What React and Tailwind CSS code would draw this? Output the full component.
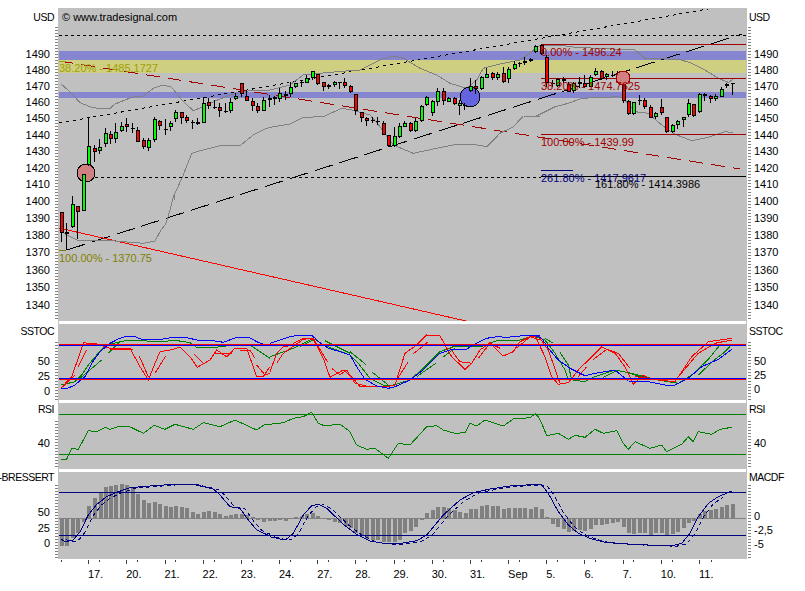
const pts = (ox, oy, a) => {
  const out = [];
  for (let i = 0; i < a.length; i += 2) out.push(`${(ox + a[i] / 3).toFixed(1)},${(oy + a[i + 1] / 3).toFixed(1)}`);
  return out.join(" ");
};

const Line = ({ ox = 0, oy = 0, a, c, w = 1, dash }) => (
  <polyline points={pts(ox, oy, a)} fill="none" stroke={c} strokeWidth={w} strokeDasharray={dash} />
);

// [x, wickTop, wickBottom, bodyTop, bodyBottom, colour] in 3x zoom units
const candleGroups = [
  [0, 0, [
    [184, 636, 726, 636, 699, "r"], [199, 669, 750, 696, 702, "k"], [217, 588, 685, 612, 682, "g"], [232, 618, 718, 618, 636, "r"],
    [250, 522, 634, 522, 634, "g"], [265, 352, 498, 438, 495, "g"], [283, 435, 485, 445, 455, "r"], [298, 418, 462, 442, 452, "g"],
    [316, 385, 440, 400, 433, "g"], [331, 392, 432, 403, 418, "r"], [346, 368, 428, 397, 418, "g"], [364, 365, 395, 378, 392, "g"],
    [379, 355, 395, 373, 382, "r"], [397, 370, 398, 385, 388, "k"], [412, 380, 425, 391, 425, "r"], [430, 415, 448, 420, 440, "r"],
    [445, 415, 452, 420, 443, "g"], [463, 350, 425, 358, 420, "g"], [478, 360, 390, 362, 377, "r"], [496, 358, 405, 388, 390, "k"],
    [511, 362, 392, 370, 382, "g"], [526, 330, 365, 337, 358, "g"], [544, 335, 372, 337, 355, "r"], [559, 345, 370, 352, 362, "r"],
    [577, 360, 388, 365, 370, "r"], [592, 355, 375, 365, 372, "r"], [610, 292, 370, 310, 370, "g"], [625, 295, 328, 305, 318, "r"],
    [643, 300, 328, 322, 324, "k"], [658, 310, 350, 322, 334, "r"], [676, 308, 338, 332, 335, "k"], [691, 295, 340, 305, 333, "g"],
    [706, 280, 300, 287, 298, "g"], [724, 250, 290, 250, 282, "r"], [739, 270, 302, 287, 302, "r"], [757, 295, 332, 303, 317, "r"],
    [772, 310, 338, 317, 332, "r"], [790, 292, 332, 300, 332, "g"],
  ]],
  [270, 0, [
    [-2, 285, 320, 295, 300, "r"], [13, 288, 315, 292, 296, "k"], [28, 265, 305, 280, 297, "g"], [46, 272, 300, 282, 288, "k"],
    [61, 245, 292, 260, 283, "g"], [76, 248, 265, 250, 260, "g"], [94, 240, 260, 245, 248, "k"], [109, 225, 250, 235, 248, "g"],
    [127, 212, 240, 213, 235, "g"], [142, 222, 255, 222, 252, "r"], [160, 245, 272, 247, 262, "r"], [175, 252, 268, 256, 262, "g"],
    [193, 243, 262, 247, 256, "g"], [208, 245, 266, 247, 250, "k"], [223, 235, 265, 246, 259, "r"], [241, 255, 280, 259, 275, "r"],
    [256, 282, 345, 283, 333, "r"], [274, 335, 365, 335, 355, "r"], [289, 350, 378, 354, 362, "r"], [307, 350, 368, 360, 362, "k"],
    [322, 350, 375, 362, 364, "k"], [340, 362, 405, 368, 405, "r"], [355, 405, 440, 406, 438, "r"], [373, 380, 440, 408, 437, "g"],
    [388, 370, 415, 378, 412, "g"], [403, 362, 380, 370, 380, "g"], [421, 365, 395, 368, 392, "r"], [436, 355, 395, 362, 392, "g"],
    [454, 316, 365, 318, 362, "g"], [469, 288, 318, 290, 316, "g"], [487, 300, 348, 303, 338, "g"], [502, 265, 318, 272, 305, "g"],
    [520, 265, 315, 272, 303, "r"], [535, 290, 305, 295, 305, "g"], [553, 292, 315, 295, 313, "r"], [568, 300, 345, 310, 317, "g"],
    [583, 310, 330, 314, 316, "k"], [601, 235, 275, 258, 272, "g"], [616, 240, 282, 258, 268, "r"], [634, 228, 270, 232, 268, "g"],
    [649, 205, 235, 222, 233, "g"], [667, 215, 240, 220, 233, "r"], [682, 215, 240, 222, 235, "g"], [700, 200, 250, 220, 247, "r"],
    [715, 200, 248, 208, 238, "g"], [733, 182, 210, 192, 208, "g"], [748, 185, 200, 190, 193, "k"], [763, 172, 195, 182, 190, "g"],
    [781, 175, 185, 177, 182, "g"], [796, 135, 160, 137, 157, "g"],
  ]],
  [535, 0, [
    [19, 132, 165, 135, 162, "r"], [34, 165, 260, 170, 250, "r"], [52, 240, 262, 248, 252, "k"], [67, 235, 260, 238, 257, "g"],
    [85, 230, 250, 238, 242, "k"], [100, 245, 275, 252, 275, "r"], [115, 245, 278, 250, 272, "g"], [133, 232, 265, 245, 252, "r"],
    [148, 225, 265, 250, 262, "r"], [166, 225, 262, 230, 262, "g"], [181, 205, 228, 212, 225, "g"], [199, 210, 240, 212, 238, "r"],
    [214, 218, 240, 222, 232, "g"], [232, 212, 232, 225, 228, "k"], [247, 212, 230, 218, 225, "g"], [265, 215, 310, 240, 303, "r"],
    [280, 300, 345, 302, 343, "r"], [295, 305, 345, 307, 343, "g"], [313, 285, 315, 300, 304, "k"], [328, 295, 328, 300, 322, "r"],
    [346, 315, 355, 322, 353, "r"], [361, 335, 358, 338, 350, "g"], [379, 298, 345, 322, 340, "r"], [394, 350, 400, 352, 397, "r"],
    [412, 372, 400, 375, 397, "g"], [427, 360, 388, 362, 375, "g"], [445, 350, 382, 352, 360, "g"], [460, 298, 350, 310, 345, "g"],
    [475, 312, 350, 312, 348, "r"], [493, 280, 338, 282, 336, "g"], [508, 278, 302, 283, 288, "k"], [526, 285, 308, 287, 296, "r"],
    [541, 283, 302, 288, 297, "g"], [559, 262, 292, 268, 290, "g"], [574, 248, 265, 252, 259, "g"], [592, 248, 285, 250, 252, "k"],
  ]],
];

const Candles = () =>
  candleGroups.flatMap(([ox, oy, list]) =>
    list.map(([x, wt, wb, bt, bb, c]) => {
      const cx = Math.round(ox + x / 3);
      const top = oy + bt / 3;
      const h = Math.max((bb - bt) / 3, 1);
      return (
        <g key={`${ox}-${x}`}>
          <rect x={cx} y={oy + wt / 3} width={1} height={(wb - wt) / 3} fill="#000" />
          <rect x={cx - 1} y={top} width={4} height={h} fill="#000" />
          {c !== "k" && h > 2 && (
            <rect x={cx} y={top + 1} width={2} height={h - 2} fill={c === "g" ? "#00ff00" : "#ff0000"} />
          )}
        </g>
      );
    })
  );

const MainDrawing = () => (
  <>
    <rect x="59" y="51" width="687" height="9" fill="#8686d0" />
    <rect x="59" y="60" width="687" height="13" fill="#cfcf82" />
    <rect x="59" y="92" width="687" height="6" fill="#8686d0" />

    <line x1="59" y1="35" x2="746" y2="35" stroke="#000" strokeDasharray="3 3" />
    <line x1="59" y1="123" x2="708" y2="9" stroke="#000" strokeDasharray="3 4" />
    <line x1="95" y1="177" x2="541" y2="177" stroke="#000" strokeDasharray="3 3" />
    <line x1="67" y1="250" x2="742" y2="34" stroke="#000" strokeDasharray="19 7" />
    <line x1="59" y1="228" x2="466" y2="321" stroke="#ff0000" />
    <line x1="59" y1="61" x2="740" y2="169" stroke="#a00000" strokeDasharray="14 8" />

    <Line c="#808080" a={[183,252,210,275,240,308,270,320,300,327,330,325,345,312,395,292,430,288,460,265,490,255,515,262,545,300,580,332,610,320,640,305,690,285,720,278,760,270,810,270]} />
    <Line c="#808080" ox={270} a={[0,270,60,255,100,225,200,215,270,210,330,180,370,168,400,175,450,205,500,225,540,250,590,265,620,240,640,205,690,192,750,180,780,160,800,140,820,135]} />
    <Line c="#808080" ox={535} a={[20,135,70,135,120,142,300,150,330,175,400,177,430,177,470,190,510,210,550,235,580,247,595,238]} />
    <Line c="#808080" oy={190} a={[178,120,200,135,230,150,270,152,310,150,370,155,430,160,465,153,480,125,498,100,510,60,520,20,530,0]} />
    <Line c="#808080" a={[522,600,525,580,550,525,575,460,600,452,660,437,720,437,760,405,800,385,810,382]} />
    <Line c="#808080" ox={270} a={[0,382,60,372,100,352,160,350,215,325,245,330,300,345,330,380,370,435,430,460,500,445,560,433,620,435,650,440,690,400,730,380,760,348,810,350]} />
    <Line c="#808080" ox={535} a={[0,350,60,320,100,310,140,295,250,290,265,295,300,335,340,340,380,375,420,403,470,422,520,412,570,395,595,398]} />

    <line x1="541" y1="44" x2="746" y2="44" stroke="#a00000" />
    <line x1="541" y1="78" x2="746" y2="78" stroke="#a00000" />
    <line x1="541" y1="134" x2="746" y2="134" stroke="#a00000" />
    <line x1="541" y1="170" x2="573" y2="170" stroke="#000080" />
    <line x1="541" y1="176" x2="746" y2="176" stroke="#000" />
    <line x1="59" y1="61" x2="66" y2="61" stroke="#a0a000" />
    <line x1="59" y1="250" x2="66" y2="250" stroke="#808000" />

    <circle cx="86" cy="173" r="9" fill="#d08080" stroke="#000" />
    <circle cx="470" cy="97" r="10" fill="#6464e0" stroke="#000" />
    <Candles />
    <circle cx="623" cy="78" r="7" fill="#d08080" stroke="#a00000" />
  </>
);

const StocDrawing = () => (
  <>
    <Line oy={320} c="#008000" a={[183,195,225,185,245,165,265,135,290,105,320,75,350,68,375,62,440,63,490,66,520,60,570,68,590,82,640,82,670,80,700,72,750,75,780,95,810,115]} />
    <Line oy={320} ox={270} c="#008000" a={[0,110,70,85,100,70,130,55,160,75,200,90,240,105,265,130,300,175,340,195,370,195,420,180,460,145,490,115,510,95,550,80,640,78,680,62,740,63,780,50,810,50]} />
    <Line oy={320} ox={535} c="#008000" a={[0,50,30,60,60,100,90,150,100,178,150,185,180,170,240,150,280,158,330,170,370,180,430,190,470,165,520,118,555,75]} />
    <Line oy={320} c="#008000" a={[183,195,210,190]} />
    <Line oy={320} c="#008000" a={[240,175,305,120]} />
    <Line oy={320} c="#008000" a={[325,100,355,70]} />
    <Line oy={320} ox={270} c="#008000" a={[90,80,130,60]} />
    <Line oy={320} ox={270} c="#008000" a={[165,62,240,100]} />
    <Line oy={320} ox={270} c="#008000" a={[240,95,287,133]} />
    <Line oy={320} ox={270} c="#008000" a={[305,155,355,195]} />
    <Line oy={320} ox={270} c="#008000" a={[440,170,497,130]} />
    <Line oy={320} ox={270} c="#008000" a={[518,112,555,85]} />
    <Line oy={320} ox={535} c="#008000" a={[30,55,55,70]} />
    <Line oy={320} ox={535} c="#008000" a={[75,97,100,135,110,180]} />
    <Line oy={320} ox={535} c="#008000" a={[205,172,250,150]} />
    <Line oy={320} ox={535} c="#008000" a={[280,158,330,175]} />
    <Line oy={320} ox={535} c="#008000" a={[490,165,540,118,565,100,585,80]} />

    <Line oy={320} c="#ff0000" a={[183,204,215,170,240,100,250,68,290,72,330,85,390,85,420,140,445,180,465,130,480,95,510,90,540,82,570,110,592,142,630,120,650,90,680,110,705,85,740,85,770,170,790,170,810,140]} />
    <Line oy={320} c="#ff0000" a={[190,200,225,165]} />
    <Line oy={320} c="#ff0000" a={[235,140,260,90]} />
    <Line oy={320} c="#ff0000" a={[330,88,400,88]} />
    <Line oy={320} c="#ff0000" a={[418,108,445,170]} />
    <Line oy={320} c="#ff0000" a={[465,160,497,108]} />
    <Line oy={320} c="#ff0000" a={[582,103,610,130]} />
    <Line oy={320} c="#ff0000" a={[645,100,695,100]} />
    <Line oy={320} c="#ff0000" a={[720,90,750,90,765,115]} />
    <Line oy={320} c="#ff0000" a={[770,135,795,165,810,160]} />
    <Line oy={320} ox={270} c="#ff0000" a={[0,155,20,100,40,80,55,78]} />
    <Line oy={320} ox={270} c="#ff0000" a={[70,70,100,55,130,58,160,115,180,172,220,150,250,175,270,200,350,200,375,195,405,100,440,75,470,45,510,48,545,110,585,148,605,130,630,90,660,68,700,108,730,95,750,65,780,50,810,60]} />
    <Line oy={320} ox={270} c="#ff0000" a={[20,130,40,100,100,58,130,55,172,125]} />
    <Line oy={320} ox={270} c="#ff0000" a={[185,145,210,165,230,150,255,190,295,200]} />
    <Line oy={320} ox={270} c="#ff0000" a={[380,180,415,125]} />
    <Line oy={320} ox={270} c="#ff0000" a={[428,103,475,65]} />
    <Line oy={320} ox={270} c="#ff0000" a={[540,85,570,125,605,130]} />
    <Line oy={320} ox={270} c="#ff0000" a={[625,115,660,70,690,85]} />
    <Line oy={320} ox={270} c="#ff0000" a={[740,85,780,50,810,50]} />
    <Line oy={320} ox={535} c="#ff0000" a={[0,48,30,110,50,170,70,193,100,188,130,150,200,80,240,100,270,140,295,193,325,165,350,178,420,185,470,110,520,65,590,55]} />
    <Line oy={320} ox={535} c="#ff0000" a={[15,55,40,90,75,190]} />
    <Line oy={320} ox={535} c="#ff0000" a={[130,170,155,140]} />
    <Line oy={320} ox={535} c="#ff0000" a={[175,118,215,88,250,100,285,145]} />
    <Line oy={320} ox={535} c="#ff0000" a={[300,170,340,175]} />
    <Line oy={320} ox={535} c="#ff0000" a={[430,170,490,100,540,70,590,60]} />

    <Line oy={320} c="#0000ff" a={[183,204,205,204,225,195,240,182,255,170,275,130,300,95,330,70,355,57,375,50,400,48,430,60,460,57,490,57,520,52,560,53,600,62,640,62,670,67,710,52,745,51,770,65,790,73,810,72]} />
    <Line oy={320} ox={270} c="#0000ff" a={[0,70,30,60,60,50,85,46,125,46,150,68,175,85,210,95,240,105,260,140,285,178,320,198,355,205,375,200,420,180,460,150,490,120,510,100,540,90,590,87,620,70,650,55,680,50,710,52,760,47,810,48]} />
    <Line oy={320} ox={535} c="#0000ff" a={[0,46,20,55,40,85,70,120,105,145,150,167,180,160,240,150,280,183,340,185,390,195,420,195,460,175,500,140,550,118,590,88]} />

    <line x1="59" y1="344" x2="746" y2="344" stroke="#ff0000" />
    <line x1="59" y1="345" x2="746" y2="345" stroke="#0000ff" />
    <line x1="59" y1="378" x2="746" y2="378" stroke="#0000ff" />
    <line x1="59" y1="379" x2="746" y2="379" stroke="#ff0000" />
  </>
);

const RsiDrawing = () => (
  <>
    <line x1="59" y1="414" x2="746" y2="414" stroke="#008000" />
    <line x1="59" y1="454" x2="746" y2="454" stroke="#008000" />
    <Line oy={320} c="#008000" a={[183,418,200,418,215,385,235,388,265,332,290,335,315,322,330,328,360,318,385,318,430,340,462,316,495,328,525,313,580,328,610,308,660,320,705,300,770,330,795,313,810,313]} />
    <Line oy={320} ox={270} c="#008000" a={[0,313,40,308,70,295,100,290,125,277,145,310,165,318,210,312,240,335,260,375,290,388,315,385,355,415,385,370,420,375,470,320,500,317,520,330,555,340,585,338,600,310,620,318,645,300,700,318,730,297,780,293,795,282,810,297]} />
    <Line oy={320} ox={535} c="#008000" a={[0,280,10,290,20,310,35,347,70,340,100,358,120,346,150,352,180,328,205,340,245,332,265,370,280,388,300,365,345,385,380,375,395,395,440,373,460,350,475,365,490,335,530,343,555,328,590,322]} />
  </>
);

const barGroups = [
  [0, [184,243,199,243,217,220,232,205,250,170,265,122,283,98,300,82,316,65,331,63,346,60,364,57,379,60,397,68,412,87,430,104,445,113,463,111,478,116,496,122,511,125,526,122,544,125,559,130,577,140,592,146,610,140,625,137,643,140,658,146,676,152,691,149,706,146,724,146,739,150,757,155,772,165,790,170]],
  [270, [-2,168,13,168,28,165,46,168,61,160,76,155,94,152,109,148,127,145,142,152,160,163,175,165,193,172,208,175,226,182,241,190,256,205,274,212,289,222,307,225,322,225,340,230,355,232,373,232,388,225,403,205,421,197,436,185,454,165,469,143,487,135,502,126,520,126,535,128,553,135,568,140,586,145,601,132,616,132,634,123,649,120,667,123,682,123,700,132,715,130,733,128,748,128,763,130,781,132,796,126]],
  [535, [19,132,34,155,52,178,67,185,85,192,100,200,115,198,133,195,148,197,166,192,181,180,199,180,214,178,232,175,247,170,265,187,280,205,295,207,313,203,328,205,346,210,361,205,379,205,394,210,412,207,427,200,445,190,460,175,475,168,493,147,508,138,526,135,541,132,559,126,574,120,592,117]],
];

const Bars = () =>
  barGroups.flatMap(([ox, a]) => {
    const out = [];
    for (let i = 0; i < a.length; i += 2) {
      const x = Math.round(ox + a[i] / 3) - 1;
      const y = a[i + 1];
      const top = 465 + Math.min(y, 160) / 3;
      const h = Math.abs(y - 160) / 3;
      out.push(<rect key={`${ox}-${i}`} x={x} y={top} width={4} height={Math.max(h, 1)} fill="#808080" />);
    }
    return out;
  });

const macdLines = [
  [0, [183,222,195,230,220,225,240,200,265,150,290,118,320,95,350,82,390,68,450,63,520,58,580,58,640,72,660,90,690,125,720,130,745,165,770,195,810,213]],
  [270, [0,215,30,222,50,222,70,205,100,150,125,122,145,118,170,130,220,178,260,208,300,228,340,235,380,237,440,227,470,210,520,150,570,105,610,83,660,72,720,63,800,58]],
  [535, [0,58,20,60,40,85,70,140,100,180,130,205,170,222,210,232,280,237,340,240,410,242,440,235,465,205,490,155,520,115,550,95,590,78]],
];

const MacdDrawing = () => (
  <>
    <line x1="59" y1="518" x2="746" y2="518" stroke="#808080" />
    <Bars />
    <line x1="59" y1="492" x2="746" y2="492" stroke="#000080" />
    <line x1="59" y1="535" x2="746" y2="535" stroke="#000080" />
    {macdLines.map(([ox, a]) => (
      <Line key={ox} ox={ox} oy={465} a={a} c="#000080" />
    ))}
    {macdLines.map(([ox, a]) => (
      <Line key={ox} ox={ox + 5} oy={465.5} a={ox === 535 ? a.slice(0, -2) : a} c="#000080" dash="4 3" />
    ))}
  </>
);

const Axis = ({ side, top, h, from, labels, heightClass }) => {
  const left = side === "left";
  const x = left ? 55 : 748;
  return (
    <div className={`relative w-[58px] shrink-0 ${heightClass}`}>
      <svg className="absolute inset-0 block" width="58" height={h} viewBox={`${left ? 0 : 747} ${top} 58 ${h}`} shapeRendering="crispEdges">
        <line x1={x + 1.5} y1={from} x2={x + 1.5} y2={top + h} stroke="#808080" strokeWidth="3" strokeDasharray="1 2" />
      </svg>
      {labels.map((l) => (
        <span
          key={l.t}
          style={{ top: l.y - top }}
          className={`absolute -translate-y-1/2 whitespace-nowrap ${
            l.name ? "text-[10.5px] tracking-[-0.5px]" : ""
          } ${left ? (l.name ? "right-1" : "right-2") : l.name ? "left-0.5" : "left-[7px]"}`}
        >
          {l.t}
        </span>
      ))}
    </div>
  );
};

const Pane = ({ top, h, heightClass, from, left, right, children, overlay }) => (
  <div className="flex">
    <Axis side="left" top={top} h={h} from={from} labels={left} heightClass={heightClass} />
    <div className={`relative w-[689px] shrink-0 overflow-hidden bg-[#c0c0c0] ${heightClass}`}>
      <svg className="block" width="689" height={h} viewBox={`58 ${top} 689 ${h}`} shapeRendering="crispEdges">
        {children}
      </svg>
      {overlay}
    </div>
    <Axis side="right" top={top} h={h} from={from} labels={right} heightClass={heightClass} />
  </div>
);

const Gap = () => <div className="ml-[58px] h-[3px] w-[689px] border-x border-[#c0c0c0]" />;

const priceLabels = [
  ["1490", 54], ["1480", 70], ["1470", 86], ["1460", 102], ["1450", 118], ["1440", 135], ["1430", 151], ["1420", 168],
  ["1410", 184], ["1400", 201], ["1390", 218], ["1380", 235], ["1370", 252], ["1360", 270], ["1350", 287], ["1340", 305],
].map(([t, y]) => ({ t, y }));

const usd = { t: "USD", y: 17, name: true };

const fibLabels = [
  { t: "38.20% - 1485.1727", x: 59, y: 68, c: "text-[#a0a000]" },
  { t: "100.00% - 1370.75", x: 59, y: 258, c: "text-[#808000]" },
  { t: "0.00% - 1496.24", x: 541, y: 52, c: "text-[#a00000]" },
  { t: "38.20% - 1474.7625", x: 541, y: 86, c: "text-[#a00000]" },
  { t: "100.00% - 1439.99", x: 541, y: 142, c: "text-[#a00000]" },
  { t: "261.80% - 1417.9617", x: 541, y: 178, c: "text-[#000080]" },
  { t: "161.80% - 1414.3986", x: 595, y: 184, c: "text-black" },
];

const majorTicks = [88, 126, 165, 203, 241, 279, 317, 355, 394, 432, 470, 508, 546, 584, 623, 661, 699];
const minorTicks = [61, 99, 137, 175, 214, 252, 290, 328, 366, 404, 443, 481, 519, 557, 595, 633, 672, 711];
const dates = ["17.", "20.", "21.", "22.", "23.", "24.", "27.", "28.", "29.", "30.", "31.", "Sep", "5.", "6.", "7.", "10.", "11."];

export default function App() {
  return (
    <div className="h-[591px] w-[805px] overflow-hidden bg-white pt-2 font-['Liberation_Sans',Arial,sans-serif] text-[11px] leading-[13px] text-black">
      <Pane
        top={8}
        h={313}
        heightClass="h-[313px]"
        from={27}
        left={[usd, ...priceLabels]}
        right={[usd, ...priceLabels]}
        overlay={
          <>
            <span className="absolute left-1 top-[3px] whitespace-nowrap">© www.tradesignal.com</span>
            {fibLabels.map((l) => (
              <span
                key={l.t}
                style={{ left: l.x - 58, top: l.y - 8 }}
                className={`absolute -translate-y-1/2 whitespace-nowrap ${l.c}`}
              >
                {l.t}
              </span>
            ))}
          </>
        }
      >
        <MainDrawing />
      </Pane>
      <Gap />
      <Pane
        top={324}
        h={76}
        heightClass="h-[76px]"
        from={342}
        left={[{ t: "SSTOC", y: 331, name: true }, { t: "50", y: 361 }, { t: "25", y: 376 }, { t: "0", y: 391 }]}
        right={[{ t: "SSTOC", y: 331, name: true }, { t: "50", y: 361 }, { t: "25", y: 375 }, { t: "0", y: 389 }]}
      >
        <StocDrawing />
      </Pane>
      <Gap />
      <Pane
        top={403}
        h={66}
        heightClass="h-[66px]"
        from={421}
        left={[{ t: "RSI", y: 409, name: true }, { t: "40", y: 443 }]}
        right={[{ t: "RSI", y: 409, name: true }, { t: "40", y: 443 }]}
      >
        <RsiDrawing />
      </Pane>
      <Gap />
      <Pane
        top={472}
        h={87}
        heightClass="h-[87px]"
        from={485}
        left={[{ t: "-BRESSERT", y: 477, name: true }, { t: "50", y: 512 }, { t: "25", y: 528 }, { t: "0", y: 543 }]}
        right={[{ t: "MACDF", y: 477, name: true }, { t: "0", y: 516 }, { t: "-2,5", y: 530 }, { t: "-5", y: 544 }]}
      >
        <MacdDrawing />
      </Pane>
      <svg className="block" width="805" height="6" viewBox="0 559 805 6" shapeRendering="crispEdges">
        {majorTicks.map((x) => (
          <line key={x} x1={x} y1="560" x2={x} y2="564" stroke="#404040" />
        ))}
        {minorTicks.map((x) => (
          <line key={x} x1={x} y1="560" x2={x} y2="562" stroke="#404040" />
        ))}
      </svg>
      <div className="flex pl-[88px] pt-[3px]">
        {dates.map((d) => (
          <span key={d} className="w-[38.2px] shrink-0">
            {d}
          </span>
        ))}
      </div>
    </div>
  );
}
